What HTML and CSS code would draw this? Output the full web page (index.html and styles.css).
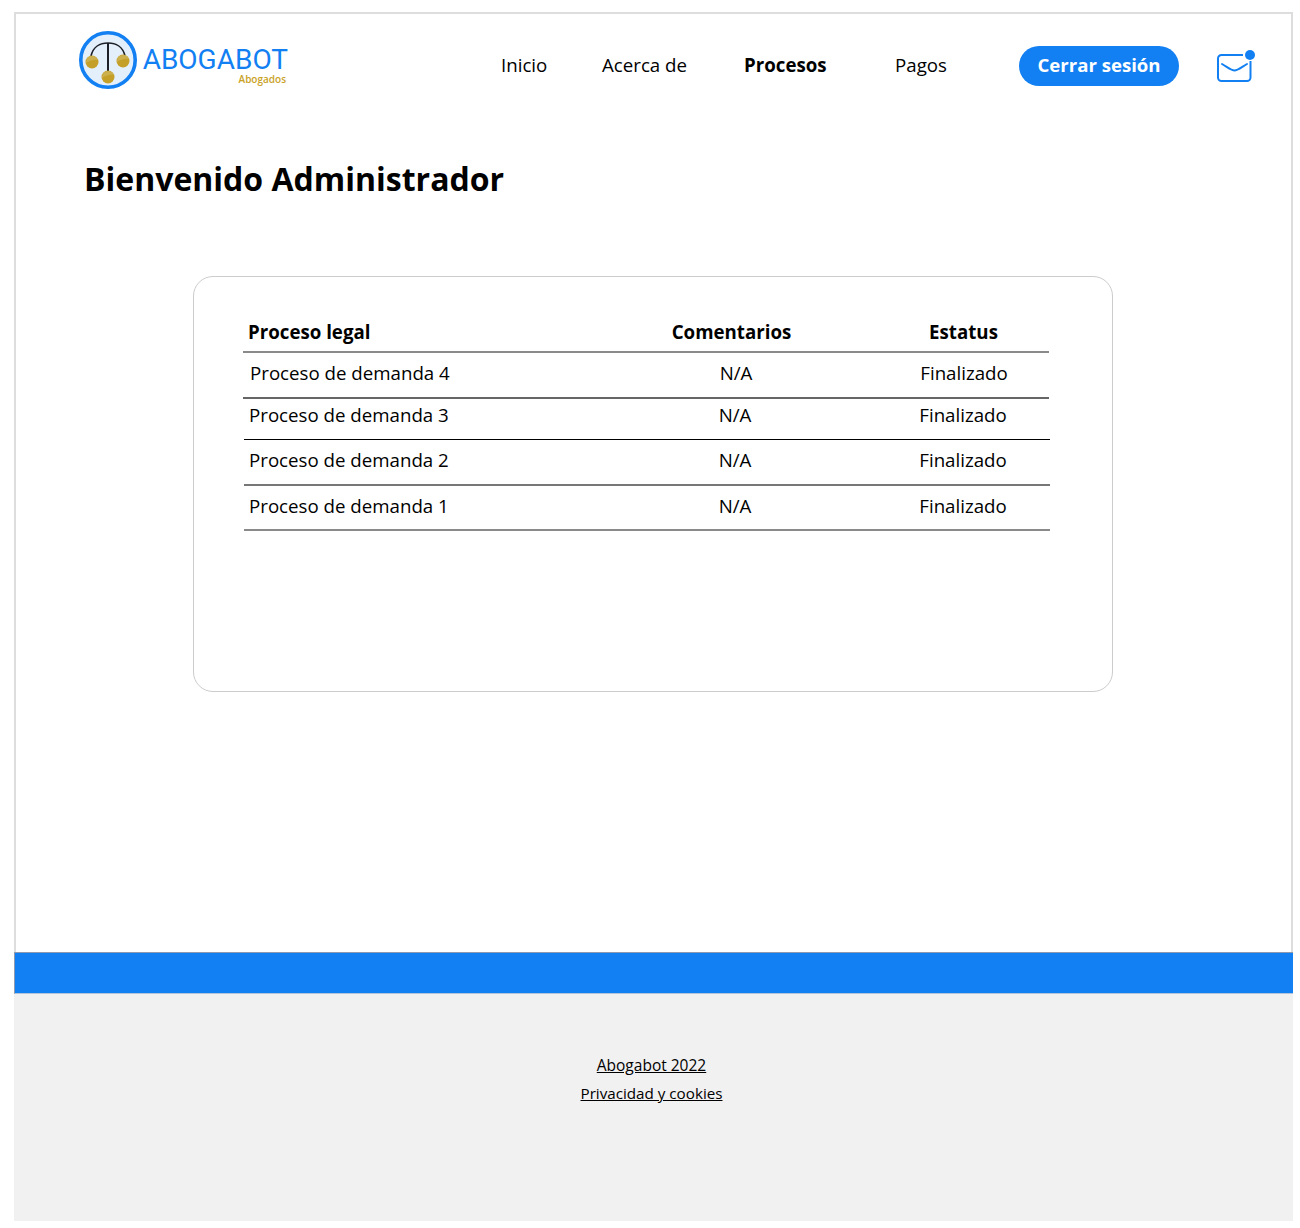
FILE: index.html
```html
<!DOCTYPE html>
<html>
  <head>
    <title>Abogabot</title>
    <link rel="stylesheet" href="styles.css">
  </head>
  <body>
    <div class="frame">
      <header class="top">
        <a class="logo" href="#">
          <svg class="logo-mark" width="60" height="60" viewBox="0 0 60 60">
            <circle cx="30" cy="30" r="27.2" fill="#e3effb" stroke="#1280f2" stroke-width="3.6"/>
            <path d="M13 26C15 17 22 13 30 13S45 17 47 26" fill="none" stroke="#1c1f26" stroke-width="1.6"/>
            <path d="M30 13V44" stroke="#1c1f26" stroke-width="2"/>
            <circle cx="14" cy="32" r="6.500" fill="#c5a028"/>
            <circle cx="45" cy="31" r="6.500" fill="#c5a028"/>
            <circle cx="30" cy="47" r="6.500" fill="#c5a028"/>
            <path d="M8 33C11 31 16 29 20 30C19 28 17 26 14 26C10 26 8 29 8 33Z" fill="#ccb04e"/>
            <path d="M39 32C42 30 47 28 51 29C50 27 48 25 45 25C41 25 39 28 39 32Z" fill="#ccb04e"/>
            <path d="M24 48C27 46 32 44 36 45C35 43 33 41 30 41C26 41 24 44 24 48Z" fill="#ccb04e"/>
          </svg>
          <span class="logo-text">
            <span class="logo-name">ABOGABOT</span>
            <span class="logo-sub">Abogados</span>
          </span>
        </a>
        <nav class="menu">
          <a class="menu-item item-inicio" href="#">Inicio</a>
          <a class="menu-item item-acerca" href="#">Acerca de</a>
          <a class="menu-item item-procesos" href="#">Procesos</a>
          <a class="menu-item item-pagos" href="#">Pagos</a>
        </nav>
        <a class="logout" href="#">Cerrar sesión</a>
        <span class="mail">
          <svg width="40" height="36" viewBox="0 0 40 36">
            <path d="M27 7H5.500A3.500 3.500 0 0 0 2 10.500V29.500A3.500 3.500 0 0 0 5.500 33H31A3.500 3.500 0 0 0 34.500 29.500V13" fill="none" stroke="#1280f2" stroke-width="2"/>
            <path d="M6 16C12 19.500 15.500 22.500 18.500 22.500S25 19.500 31 16" fill="none" stroke="#1280f2" stroke-width="2" stroke-linecap="round"/>
            <circle cx="34" cy="7" r="5" fill="#1280f2"/>
          </svg>
        </span>
      </header>

      <h1 class="welcome">Bienvenido Administrador</h1>

      <section class="card">
        <div class="row row-head">
          <div class="col-name">Proceso legal</div>
          <div class="col-comment">Comentarios</div>
          <div class="col-status">Estatus</div>
        </div>
        <div class="row row-4">
          <div class="col-name">Proceso de demanda 4</div>
          <div class="col-comment">N/A</div>
          <div class="col-status">Finalizado</div>
        </div>
        <div class="row row-3">
          <div class="col-name">Proceso de demanda 3</div>
          <div class="col-comment">N/A</div>
          <div class="col-status">Finalizado</div>
        </div>
        <div class="row row-2">
          <div class="col-name">Proceso de demanda 2</div>
          <div class="col-comment">N/A</div>
          <div class="col-status">Finalizado</div>
        </div>
        <div class="row row-1">
          <div class="col-name">Proceso de demanda 1</div>
          <div class="col-comment">N/A</div>
          <div class="col-status">Finalizado</div>
        </div>
      </section>
    </div>

    <div class="band"></div>

    <footer class="bottom">
      <a class="copy" href="#">Abogabot 2022</a>
      <a href="#">Privacidad y cookies</a>
    </footer>
  </body>
</html>
```

FILE: styles.css
```css
body {
  margin: 0;
  padding: 12px 7px 8px 14px;
  background: #fff;
  color: #000;
  font-family: "Open Sans", sans-serif;
}
a {
  color: inherit;
  text-decoration: none;
}

.frame {
  box-sizing: border-box;
  height: 940px;
  width: 1279px;
  border: 2px solid #ddd;
  border-bottom: none;
  overflow: hidden;
}

.top {
  display: flex;
  align-items: center;
  height: 104px;
  padding: 0 0 0 62px;
}
.logo {
  display: flex;
  align-items: center;
  gap: 5px;
  width: 423px;
  margin-bottom: 12px;
  flex: none;
}
.logo-mark {
  flex: none;
}
.logo-text {
  display: flex;
  flex-direction: column;
  align-items: flex-end;
  width: 146px;
  padding-top: 11px;
}
.logo-name {
  color: #1280f2;
  font-family: Roboto, sans-serif;
  font-size: 28px;
  font-weight: 400;
  line-height: 26px;
  margin-right: 1px;
}
.logo-sub {
  color: #c9a227;
  font-size: 10px;
  font-weight: 600;
  line-height: 12px;
  margin-right: 3px;
}
.menu {
  display: flex;
  align-items: center;
  font-size: 18.700px;
  margin-bottom: 4px;
  flex: none;
}
.menu-item {
  display: block;
  white-space: nowrap;
}
.item-inicio {
  width: 101px;
}
.item-acerca {
  width: 142px;
}
.item-procesos {
  width: 151px;
  font-weight: 700;
}
.item-pagos {
  width: 124px;
}
.logout {
  flex: none;
  width: 160px;
  height: 40px;
  border-radius: 20px;
  background: #1280f2;
  color: #fff;
  font-size: 18.600px;
  font-weight: 700;
  line-height: 38px;
  text-align: center;
}
.mail {
  flex: none;
  display: block;
  height: 36px;
  margin-left: 37px;
}

.welcome {
  margin: 39px 0 0 68px;
  font-size: 32px;
  font-weight: 700;
  line-height: 44px;
}

.card {
  box-sizing: border-box;
  width: 920px;
  height: 416px;
  margin: 75px 0 0 177px;
  padding: 32px 0 0 49px;
  border: 1px solid #ccc;
  border-radius: 20px;
}
.row {
  box-sizing: border-box;
  display: flex;
  align-items: center;
  width: 806px;
  font-size: 18.700px;
}
.row-head {
  height: 44px;
  padding-top: 3px;
  font-weight: 700;
  border-bottom: 2px solid #8a8a8a;
}
.row-4 {
  height: 46px;
  padding-bottom: 6px;
  border-bottom: 2px solid #666;
}
.row-3,
.row-2,
.row-1 {
  margin-left: 1px;
}
.row-3 {
  height: 41px;
  padding-bottom: 9px;
  border-bottom: 1px solid #000;
}
.row-2 {
  height: 46px;
  padding-bottom: 5px;
  border-bottom: 2px solid #777;
}
.row-1 {
  height: 45px;
  padding-bottom: 5px;
  border-bottom: 2px solid #8a8a8a;
}
.col-name {
  width: 378px;
  padding-left: 5px;
  flex: none;
  white-space: nowrap;
}
.row-4 .col-name {
  padding-left: 7px;
}
.col-comment {
  width: 232px;
  margin-left: -8px;
  text-align: center;
  flex: none;
}
.row-head .col-comment {
  margin-left: -10.500px;
}
.col-status {
  width: 212px;
  text-align: center;
  flex: none;
  margin-left: 6px;
}
.row-head .col-status {
  margin-left: 10px;
}

.band {
  box-sizing: border-box;
  width: 1279px;
  height: 42px;
  background: #1280f2;
  border: 1px solid #8d99ae;
  border-right: none;
  border-bottom-color: #b5c4d8;
}
.bottom {
  box-sizing: border-box;
  display: flex;
  flex-direction: column;
  align-items: center;
  gap: 6px;
  width: 1279px;
  height: 227px;
  padding: 60px 4px 0 0;
  background: #f1f1f1;
  font-size: 15.200px;
  line-height: 22px;
}
.bottom a {
  text-decoration: underline;
}
.bottom .copy {
  font-size: 15.500px;
}
```
